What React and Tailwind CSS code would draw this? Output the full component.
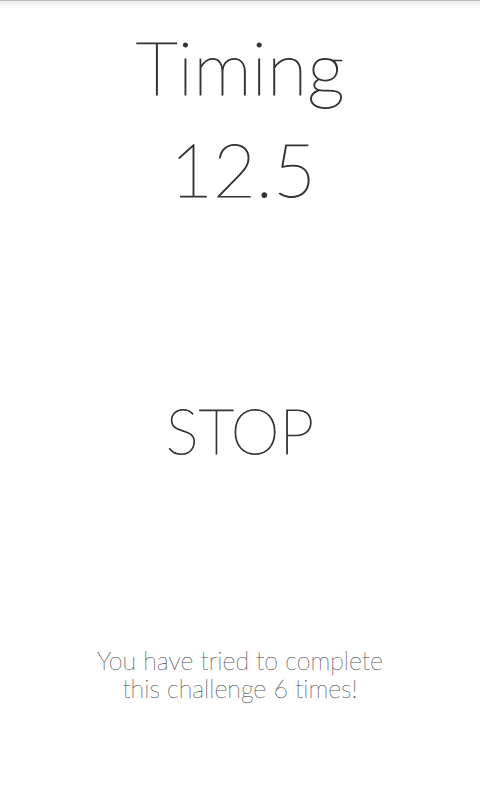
import React from 'react';

const font = { fontFamily: 'Lato, "Liberation Sans", sans-serif' };

const App = () => {
  const seconds = 12.5;
  const tries = 6;

  return (
    <div className="relative w-[480px] h-[800px] bg-white overflow-hidden text-[#333] [font-variant-ligatures:none]" style={font}>
      {/* shadow from the action bar */}
      <div className="absolute top-0 left-0 right-0 h-[1px] bg-[#bdbdbd]" />
      <div className="absolute top-[1px] left-0 right-0 h-[8px] bg-gradient-to-b from-[#ececec] to-white" />

      <div className="flex flex-col items-center h-full">
        <h1 className="mt-[22px] text-[74px] leading-[90px] font-thin [-webkit-text-stroke:1px_#333]">Timing</h1>
        <div className="mt-[12px] ml-[6px] text-[74px] leading-[90px] font-thin [-webkit-text-stroke:1px_#333]">{seconds}</div>

        <button className="mt-[176px] text-[62px] leading-[80px] font-thin text-[#333] [-webkit-text-stroke:0.9px_#333]">STOP</button>

        <p className="mt-[176px] text-center text-[25px] leading-[28px] font-thin text-[#555] [-webkit-text-stroke:0.25px_#555]">
          You have tried to complete
          <br />
          this challenge {tries} times!
        </p>
      </div>
    </div>
  );
};

export default App;
